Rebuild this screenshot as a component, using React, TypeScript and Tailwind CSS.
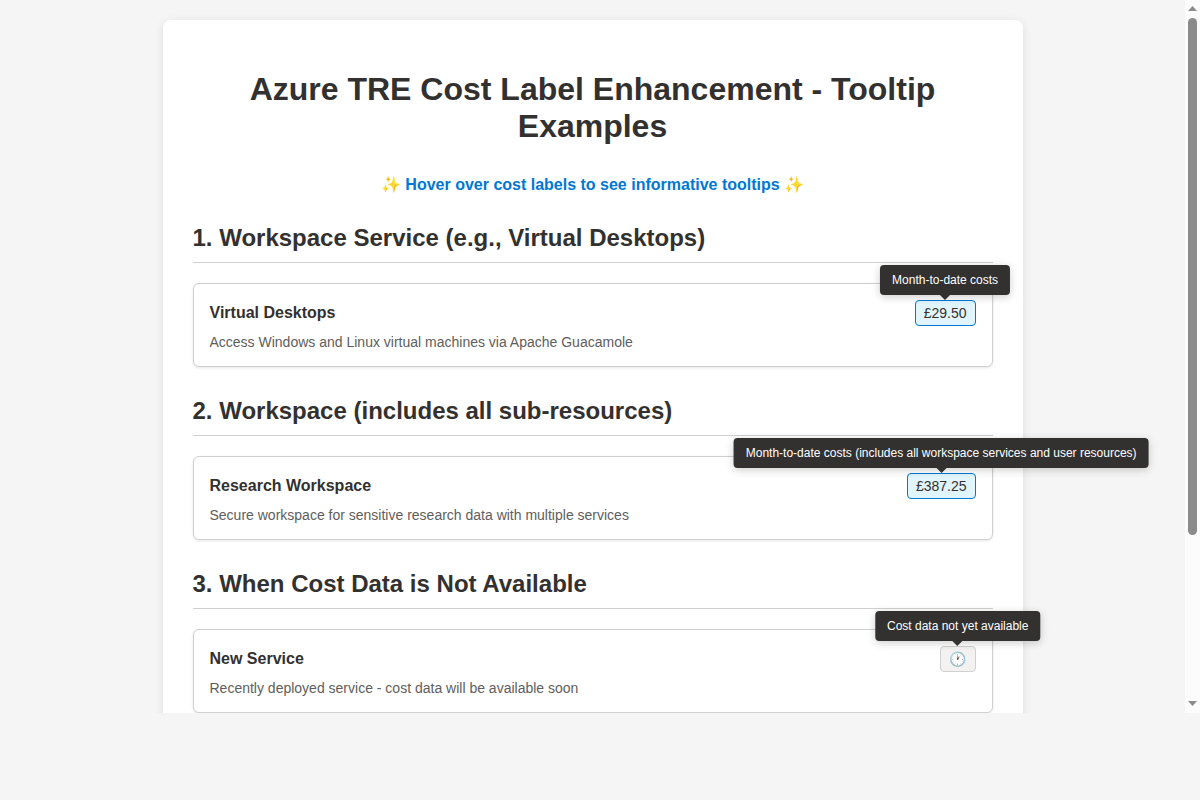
import React from "react";

type Item = {
  heading: string;
  title: string;
  description: string;
  cost: string;
  tooltip: string;
  pending?: boolean;
};

const items: Item[] = [
  {
    heading: "1. Workspace Service (e.g., Virtual Desktops)",
    title: "Virtual Desktops",
    description: "Access Windows and Linux virtual machines via Apache Guacamole",
    cost: "£29.50",
    tooltip: "Month-to-date costs",
  },
  {
    heading: "2. Workspace (includes all sub-resources)",
    title: "Research Workspace",
    description: "Secure workspace for sensitive research data with multiple services",
    cost: "£387.25",
    tooltip: "Month-to-date costs (includes all workspace services and user resources)",
  },
  {
    heading: "3. When Cost Data is Not Available",
    title: "New Service",
    description: "Recently deployed service - cost data will be available soon",
    cost: "🕐",
    tooltip: "Cost data not yet available",
    pending: true,
  },
];

function CostLabel({ cost, tooltip, pending }: Pick<Item, "cost" | "tooltip" | "pending">) {
  return (
    <div
      className={
        "relative h-[26px] rounded-[4px] border px-2 py-1 text-[14px] leading-[16px] text-[#323130] " +
        (pending ? "w-[35.6px] border-[#d0d0d0] bg-[#f3f2f1]" : "border-[#0078d4] bg-[#e1f5fe]")
      }
    >
      {cost}
      <div className="absolute bottom-[30px] left-1/2 z-10 h-[30px] -translate-x-1/2 whitespace-nowrap rounded-[4px] bg-[#323130] px-3 py-2 text-[12px] leading-[14px] text-white shadow-[0_2px_8px_rgba(0,0,0,0.2)]">
        {tooltip}
        <div className="absolute left-1/2 top-full -ml-[5px] border-[5px] border-transparent border-t-[#323130]" />
      </div>
    </div>
  );
}

function Section({ item }: { item: Item }) {
  return (
    <section className="mb-[30px]">
      <h2 className="mb-5 border-b border-[#d0d0d0] pb-[10px] text-[24px] font-bold leading-[28px]">{item.heading}</h2>
      <div className="h-[84px] rounded-[6px] border border-[#d0d0d0] bg-white p-4 shadow-[0_1px_3px_rgba(0,0,0,0.1)]">
        <div className="flex items-center justify-between">
          <h3 className="text-[16px] font-semibold leading-[18px]">{item.title}</h3>
          <CostLabel cost={item.cost} tooltip={item.tooltip} pending={item.pending} />
        </div>
        <p className="mt-2 text-[14px] leading-[16px] text-[#605e5c]">{item.description}</p>
      </div>
    </section>
  );
}

function Scrollbar() {
  return (
    <div className="flex h-[713px] w-[15px] shrink-0 flex-col items-center justify-between bg-[#fcfcfc]">
      <svg width="15" height="18" viewBox="0 0 15 18" fill="#8b8b8b">
        <path d="M3 11 7.5 6 12 11Z" />
      </svg>
      <div className="-mt-[160px] h-[517px] w-[9px] rounded-full bg-[#8b8b8b]" />
      <svg width="15" height="18" viewBox="0 0 15 18" fill="#8b8b8b">
        <path d="M3 6 7.5 11 12 6Z" />
      </svg>
    </div>
  );
}

export default function App() {
  return (
    <div className="h-[800px] overflow-hidden bg-[#f5f5f5] font-['Liberation_Sans',Arial,sans-serif] text-[#323130]">
      <div className="flex h-[713px] overflow-hidden">
        <div className="flex-1 pt-5">
          <main className="mx-auto h-[1000px] w-[860px] rounded-[8px] bg-white px-[30px] pt-[51px] shadow-[0_2px_10px_rgba(0,0,0,0.1)]">
            <h1 className="text-center text-[32px] font-bold leading-[37px]">
              Azure TRE Cost Label Enhancement - Tooltip Examples
            </h1>
            <p className="mb-[30px] mt-[31px] text-center text-[16px] font-bold leading-[18px] text-[#0078d4]">
              ✨ Hover over cost labels to see informative tooltips ✨
            </p>
            {items.map((item) => (
              <Section key={item.heading} item={item} />
            ))}
          </main>
        </div>
        <Scrollbar />
      </div>
    </div>
  );
}
